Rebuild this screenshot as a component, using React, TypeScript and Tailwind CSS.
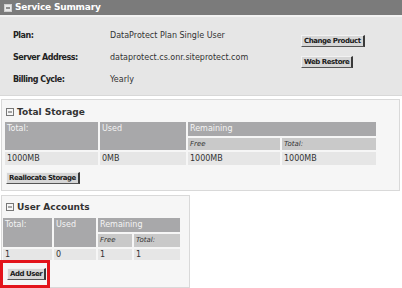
import React from "react";

function MinusBox({ light = false }: { light?: boolean }) {
  return light ? (
    <svg width="8" height="8" viewBox="0 0 8 8" className="shrink-0">
      <rect x="0.5" y="0.5" width="7" height="7" fill="#e8e8e8" stroke="#cfcfcf" />
      <rect x="2" y="3.5" width="4" height="1" fill="#333" />
    </svg>
  ) : (
    <svg width="8" height="8" viewBox="0 0 8 8" className="shrink-0">
      <rect x="0.5" y="0.5" width="7" height="7" fill="none" stroke="#777" />
      <rect x="2" y="3.5" width="4" height="1" fill="#555" />
    </svg>
  );
}

function Btn({ children }: { children: React.ReactNode }) {
  return (
    <div className="flex w-fit items-center justify-center h-[12px] px-[2px] bg-[#d6d6d6] border-t border-l border-t-[#f2f2f2] border-l-[#f2f2f2] border-r-2 border-b border-r-[#3a3a3a] border-b-[#555] text-[7px] font-bold tracking-[-0.45px] text-[#1a1a1a] leading-none whitespace-nowrap">
      {children}
    </div>
  );
}

export default function App() {
  return (
    <div className="relative w-[402px] h-[288px] overflow-hidden bg-white font-['DejaVu_Sans',sans-serif] text-[#333]">
      {/* Header */}
      <div className="h-[15px] bg-[#7b7b7b] flex items-center pl-[4px] gap-[3px]">
        <MinusBox light />
        <span className="text-[9px] font-bold text-white tracking-[-0.2px] leading-none">Service Summary</span>
      </div>
      <div className="h-[2px] bg-[#f3f3f3]" />
      {/* Summary */}
      <div className="h-[79px] bg-[#e6e6e6] border-b border-[#d8d8d8] flex">
        <div className="pl-[13px] pt-[8px] grid grid-cols-[97px_191px] auto-rows-[22px] items-center text-[8px] leading-none">
          <span className="font-bold tracking-[-0.5px] text-[#222]">Plan:</span>
          <span className="text-[#333]">DataProtect Plan Single User</span>
          <span className="font-bold tracking-[-0.5px] text-[#222]">Server Address:</span>
          <span className="text-[#333]">dataprotect.cs.onr.siteprotect.com</span>
          <span className="font-bold tracking-[-0.5px] text-[#222]">Billing Cycle:</span>
          <span className="text-[#333]">Yearly</span>
        </div>
        <div className="pt-[18px] flex flex-col items-start gap-[9px]">
          <Btn>Change Product</Btn>
          <Btn>Web Restore</Btn>
        </div>
      </div>

      {/* Total Storage */}
      <div className="mt-[3px] ml-[1px] w-[399px] h-[92px] border border-[#d9d9d9] bg-[#f6f6f6] pl-[3px] pt-[5px]">
        <div className="h-[14px] flex items-center gap-[3px] pl-[1px]">
          <MinusBox />
          <span className="text-[9px] font-bold text-[#333] leading-none">Total Storage</span>
        </div>
        <div className="mt-[3px] grid grid-cols-[93px_86px_92px_94px] grid-rows-[14px_12px_13px] gap-[2px] text-[8px] leading-none">
          <div className="row-span-2 bg-[#a8a8aa] text-[#f4f4f4] pl-[2px] pt-[3px]">Total:</div>
          <div className="row-span-2 bg-[#a8a8aa] text-[#f4f4f4] pl-[2px] pt-[3px]">Used</div>
          <div className="col-span-2 bg-[#a8a8aa] text-[#f4f4f4] pl-[2px] pt-[3px]">Remaining</div>
          <div className="bg-[#c9c9c9] italic text-[7px] text-[#333] pl-[2px] pt-[3px]">Free</div>
          <div className="bg-[#c9c9c9] italic text-[7px] text-[#333] pl-[2px] pt-[3px]">Total:</div>
          <div className="bg-[#e6e6e6] pl-[2px] pt-[3px] text-[#333]">1000MB</div>
          <div className="bg-[#e6e6e6] pl-[2px] pt-[3px] text-[#333]">0MB</div>
          <div className="bg-[#e6e6e6] pl-[2px] pt-[3px] text-[#333]">1000MB</div>
          <div className="bg-[#e6e6e6] pl-[2px] pt-[3px] text-[#333]">1000MB</div>
        </div>
        <div className="mt-[7px] pl-[1px]">
          <Btn>Reallocate Storage</Btn>
        </div>
      </div>

      {/* User Accounts */}
      <div className="mt-[4px] ml-[1px] w-[189px] h-[93px] border border-[#d9d9d9] bg-[#f6f6f6] pl-[1px] pt-[4px]">
        <div className="h-[14px] flex items-center gap-[3px] pl-[3px]">
          <MinusBox />
          <span className="text-[9px] font-bold text-[#333] leading-none">User Accounts</span>
        </div>
        <div className="mt-[4px] grid grid-cols-[49px_42px_34px_46px] grid-rows-[14px_13px_11px] gap-[2px] text-[8px] leading-none">
          <div className="row-span-2 bg-[#a8a8aa] text-[#f4f4f4] pl-[2px] pt-[3px]">Total:</div>
          <div className="row-span-2 bg-[#a8a8aa] text-[#f4f4f4] pl-[2px] pt-[3px]">Used</div>
          <div className="col-span-2 bg-[#a8a8aa] text-[#f4f4f4] pl-[2px] pt-[3px]">Remaining</div>
          <div className="bg-[#c9c9c9] italic text-[7px] text-[#333] pl-[2px] pt-[3px]">Free</div>
          <div className="bg-[#c9c9c9] italic text-[7px] text-[#333] pl-[2px] pt-[3px]">Total:</div>
          <div className="bg-[#e6e6e6] pl-[2px] pt-[2px] text-[#333]">1</div>
          <div className="bg-[#e6e6e6] pl-[2px] pt-[2px] text-[#333]">0</div>
          <div className="bg-[#e6e6e6] pl-[2px] pt-[2px] text-[#333]">1</div>
          <div className="bg-[#e6e6e6] pl-[2px] pt-[2px] text-[#333]">1</div>
        </div>
        <div className="mt-[8px] pl-[4px]">
          <Btn>Add User</Btn>
        </div>
      </div>

      {/* Red highlight annotation */}
      <div className="absolute left-0 top-[260px] w-[50px] h-[28px] border-[3px] border-[#e3141b]" />
    </div>
  );
}
